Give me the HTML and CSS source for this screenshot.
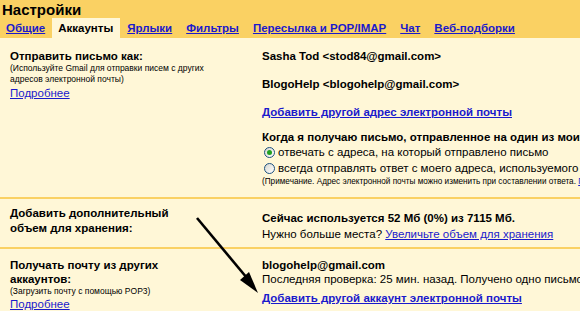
FILE: index.html
```html
<!DOCTYPE html>
<html lang="ru">
<head>
<meta charset="UTF-8">
<title>Настройки</title>
<link rel="stylesheet" href="styles.css">
</head>
<body>
  <div class="header">
    <h1>Настройки</h1>
    <div class="tabs">
      <a class="tab" href="#">Общие</a>
      <span class="tab active">Аккаунты</span>
      <a class="tab" href="#">Ярлыки</a>
      <a class="tab" href="#">Фильтры</a>
      <a class="tab" href="#">Пересылка и POP/IMAP</a>
      <a class="tab" href="#">Чат</a>
      <a class="tab" href="#">Веб-подборки</a>
    </div>
  </div>

  <div class="content">
    <div class="row row-send">
      <div class="label">
        <div class="title">Отправить письмо как:</div>
        <div class="hint">(Используйте Gmail для отправки писем с других<br>адресов электронной почты)</div>
        <a class="more" href="#">Подробнее</a>
      </div>
      <div class="value">
        <div class="strong">Sasha Tod &lt;stod84@gmail.com&gt;</div>
        <div class="strong addr2">BlogoHelp &lt;blogohelp@gmail.com&gt;</div>
        <a class="action add-addr" href="#">Добавить другой адрес электронной почты</a>
        <div class="strong reply-title">Когда я получаю письмо, отправленное на один из моих адресов:</div>
        <label class="option"><span class="radio checked"></span>отвечать с адреса, на который отправлено письмо</label>
        <label class="option"><span class="radio"></span>всегда отправлять ответ с моего адреса, используемого по умолчанию</label>
        <div class="hint note">(Примечание. Адрес электронной почты можно изменить при составлении ответа. <a href="#">Подробнее</a>)</div>
      </div>
    </div>

    <div class="row row-storage">
      <div class="label">
        <div class="title">Добавить дополнительный<br>объем для хранения:</div>
      </div>
      <div class="value">
        <div class="strong">Сейчас используется 52 Мб (0%) из 7115 Мб.</div>
        <div class="plain usage">Нужно больше места? <a href="#">Увеличьте объем для хранения</a></div>
      </div>
    </div>

    <div class="row row-pop">
      <div class="label">
        <div class="title">Получать почту из других<br>аккаунтов:</div>
        <div class="hint">(Загрузить почту с помощью POP3)</div>
        <a class="more" href="#">Подробнее</a>
      </div>
      <div class="value">
        <div class="strong">blogohelp@gmail.com</div>
        <div class="plain checked-at">Последняя проверка: 25 мин. назад. Получено одно письмо.</div>
        <a class="action add-account" href="#">Добавить другой аккаунт электронной почты</a>
      </div>
    </div>
  </div>

  <svg class="arrow" width="580" height="311" viewBox="0 0 580 311">
    <line x1="197" y1="218" x2="247" y2="278" stroke="#000" stroke-width="2.6"/>
    <polygon points="258,293 240,280 249,272" fill="#000"/>
  </svg>
</body>
</html>
```

FILE: styles.css
```css
body {
  margin: 0;
  font-family: "Liberation Sans", Arial, sans-serif;
  font-size: 11.5px;
  line-height: 14px;
  color: #000;
  background-color: #fff7d7;
  overflow: hidden;
  width: 580px;
  height: 311px;
  position: relative;
}

a {
  color: #1a1acc;
}

.header {
  background-color: #fad163;
  height: 38px;
}

.header h1 {
  margin: 0;
  padding: 1px 0 0 2px;
  font-size: 15px;
  line-height: 17px;
  font-weight: bold;
}

.tabs {
  display: flex;
  height: 21px;
}

.tab {
  display: block;
  padding: 3px 7px 0;
  font-weight: bold;
  white-space: nowrap;
}

.tab:first-child {
  padding-left: 6px;
}

.tab.active {
  background-color: #fff7d7;
  color: #000;
  padding-left: 6px;
}

.row {
  display: flex;
  white-space: nowrap;
  box-sizing: border-box;
}

.row + .row {
  border-top: 2px solid #fad163;
}

.label {
  width: 252px;
  flex: none;
  padding-left: 10px;
}

.value {
  flex: 1;
}

.title,
.strong {
  font-weight: bold;
}

.hint {
  font-size: 8.5px;
  line-height: 11px;
}

.note {
  font-size: 8.2px;
}

.more {
  display: inline-block;
}

.action {
  display: inline-block;
  font-weight: bold;
}

/* send mail as */
.row-send {
  padding-top: 11px;
  height: 159px;
}

.row-send .more {
  margin-top: 1px;
}

.addr2 {
  margin-top: 14px;
}

.add-addr {
  margin-top: 14px;
}

.reply-title {
  margin-top: 11px;
}

.option {
  display: flex;
  align-items: center;
  line-height: 16px;
}

.radio {
  width: 9px;
  height: 9px;
  margin: 0 3px 0 2px;
  border: 1px solid #1c5180;
  border-radius: 50%;
  background: linear-gradient(135deg, #d8d8d0, #ffffff);
  display: flex;
  align-items: center;
  justify-content: center;
}

.radio.checked::after {
  content: "";
  width: 5px;
  height: 5px;
  border-radius: 50%;
  background-color: #21a121;
}

/* storage */
.row-storage {
  height: 50px;
  padding-top: 7px;
}

.row-storage .title {
  line-height: 15px;
}

.row-storage .value {
  padding-top: 5px;
}

.usage {
  margin-top: 2px;
}

/* pop */
.row-pop {
  padding-top: 9px;
}

.row-pop .more {
  margin-top: 0;
}

.add-account {
  margin-top: 5px;
}

.arrow {
  position: absolute;
  left: 0;
  top: 0;
  pointer-events: none;
}
```
